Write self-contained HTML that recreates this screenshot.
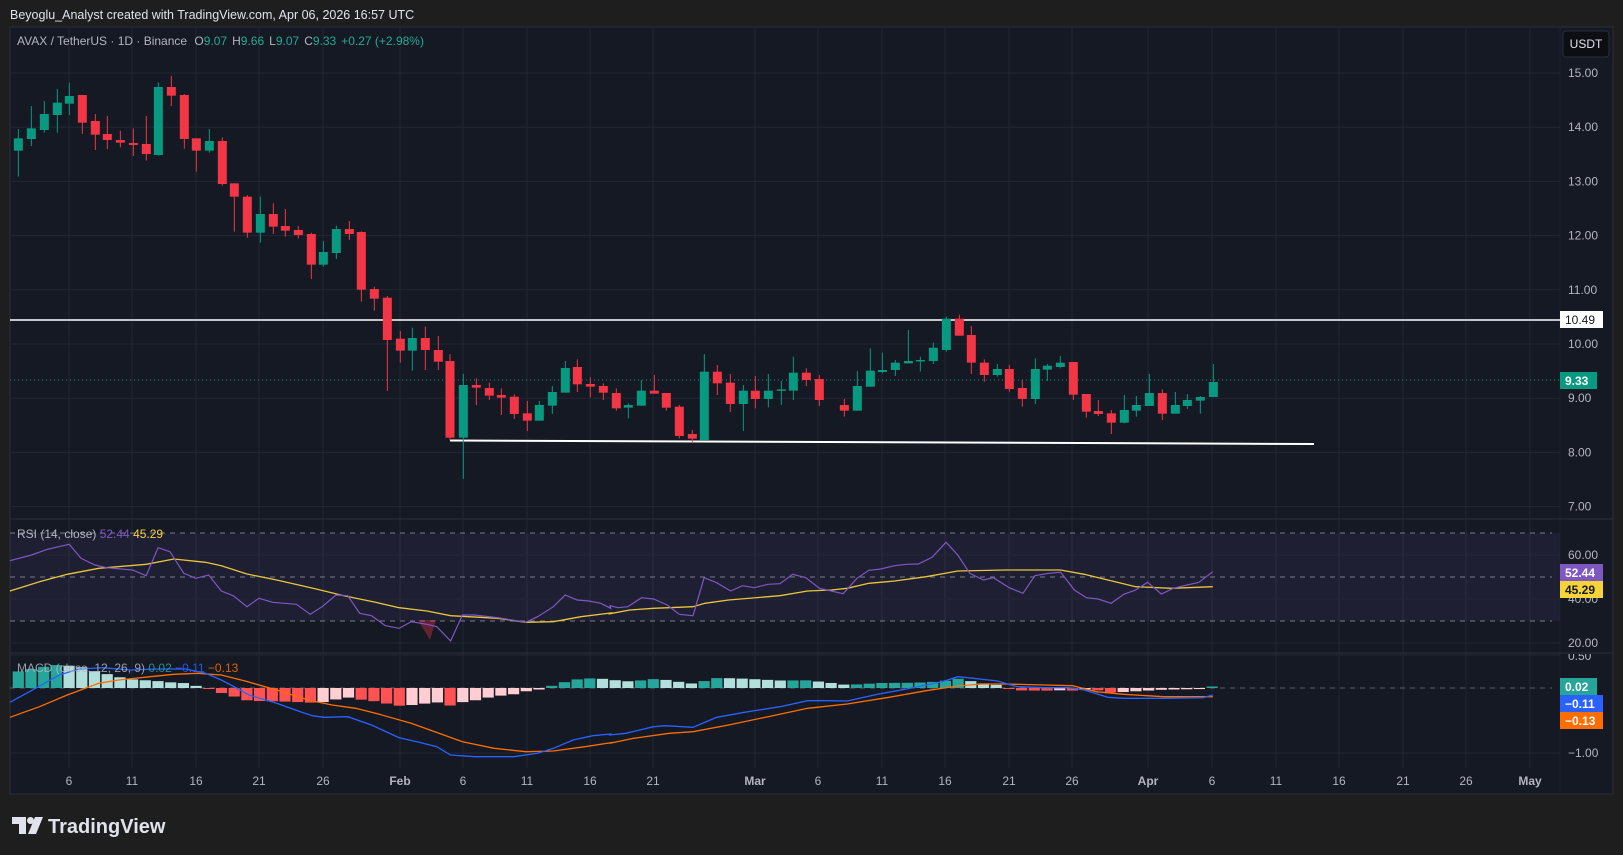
<!DOCTYPE html>
<html><head><meta charset="utf-8"><style>
html,body{margin:0;padding:0;background:#1e1e1e;width:1623px;height:855px;overflow:hidden;font-family:"Liberation Sans",sans-serif}
</style></head><body>
<svg id="s" width="1623" height="855" xmlns="http://www.w3.org/2000/svg" style="position:absolute;left:0;top:0;font-family:'Liberation Sans',sans-serif"></svg>
<script>
const S=document.getElementById('s');let h='';
const L=10,R=1613,AX=1560,T=27,B=794;
h+=`<text x="10" y="19" fill="#e0e3eb" font-size="12.5">Beyoglu_Analyst created with TradingView.com, Apr 06, 2026 16:57 UTC</text>`;
h+=`<rect x="${L}" y="${T}" width="${R-L}" height="${B-T}" fill="#151924" stroke="#2a2e39"/>`;
const dates=[[69,'6'],[132,'11'],[196,'16'],[259,'21'],[323,'26'],[400,'Feb'],[463,'6'],[527,'11'],[590,'16'],[653,'21'],[755,'Mar'],[818,'6'],[882,'11'],[945,'16'],[1009,'21'],[1072,'26'],[1148,'Apr'],[1212,'6'],[1276,'11'],[1339,'16'],[1403,'21'],[1466,'26'],[1530,'May']];
dates.forEach(d=>{h+=`<line x1="${d[0]}" y1="${T}" x2="${d[0]}" y2="768" stroke="#232733"/>`;
h+=`<text x="${d[0]}" y="785" fill="#b2b5be" font-size="12" text-anchor="middle" ${isNaN(d[1])?'font-weight="bold"':''}>${d[1]}</text>`;});
const py=p=>73+(15-p)*54.2;
for(let p=7;p<=15;p++){const y=py(p);h+=`<line x1="${L}" y1="${y}" x2="${AX}" y2="${y}" stroke="#232733"/><text x="1568" y="${y+4}" fill="#b2b5be" font-size="12">${p.toFixed(2)}</text>`;}
h+=`<line x1="${AX}" y1="${T}" x2="${AX}" y2="${B}" stroke="#1c202b"/>`;
h+=`<rect x="${L}" y="533" width="${AX-L}" height="88" fill="rgba(126,87,194,0.1)"/>`;
[[60,555],[40,599],[20,643]].forEach(a=>{h+=`<line x1="${L}" y1="${a[1]}" x2="${AX}" y2="${a[1]}" stroke="#232733"/>`;});
[533,577,621].forEach(y=>{h+=`<line x1="${L}" y1="${y}" x2="${AX-8}" y2="${y}" stroke="#787b86" stroke-dasharray="5,5"/>`;});
h+=`<text x="1568" y="559" fill="#b2b5be" font-size="12">60.00</text><text x="1568" y="603" fill="#b2b5be" font-size="12">40.00</text><text x="1568" y="647" fill="#b2b5be" font-size="12">20.00</text>`;
[655,753].forEach(y=>h+=`<line x1="${L}" y1="${y}" x2="${AX}" y2="${y}" stroke="#232733"/>`);
h+=`<line x1="${L}" y1="688" x2="${AX-8}" y2="688" stroke="#787b86" stroke-dasharray="5,5" opacity=".7"/>`;
h+=`<text x="1568" y="660" fill="#b2b5be" font-size="12">0.50</text><text x="1568" y="757" fill="#b2b5be" font-size="12">−1.00</text>`;
h+=`<rect x="1561" y="648" width="51" height="6" fill="#151924"/>`;
h+=`<line x1="${L}" y1="519" x2="${R}" y2="519" stroke="#2a2e39"/><line x1="${L}" y1="653" x2="${R}" y2="653" stroke="#2a2e39"/>`;
const z4=[[25,'G',235,272,207,350],[64,'G',205,237,138,258],[103,'G',162,210,123,218],[142,'G',128,165,87,218],[178,'G',108,131,68,165],[217,'R',105,188,105,222],[256,'R',183,224,162,270],[292,'R',222,240,168,267],[331,'R',240,248,212,262],[370,'R',249,255,205,288],[409,'R',252,282,168,302],[445,'G',81,285,67,287],[484,'R',81,107,48,138],[523,'R',105,237,102,266],[559,'R',235,272,235,335],[598,'G',243,272,207,278],[637,'R',243,372,232,377],[673,'R',370,410,370,515],[712,'R',410,518,405,533],[751,'G',462,518,410,548],[790,'R',462,500,430,522],[826,'R',498,512,447,530],[865,'R',510,525,498,535],[904,'R',522,614,518,657],[940,'G',576,614,543,620],[979,'G',507,579,497,597],[1018,'R',507,522,483,540],[1054,'R',516,689,514,725],[1093,'R',687,716,680,752],[1132,'R',713,840,708,993],[1171,'R',836,872,813,908],[1207,'G',834,872,803,932],[1246,'R',834,870,800,930],[1285,'R',870,905,828,930]];
const z5=[[30,'R',183,413,162,420],[70,'G',255,413,222,537],[109,'R',255,263,235,315],[148,'R',264,287,248,300],[184,'R',285,293,265,345],[223,'R',290,342,283,357],[262,'R',340,362,303,393],[298,'G',315,362,303,362],[337,'G',276,317,258,342],[376,'G',204,278,183,278],[412,'R',201,253,178,276],[451,'R',252,260,232,292],[490,'R',258,278,250,300],[529,'R',279,325,265,332],[565,'G',315,323,310,355],[604,'G',272,317,240,317],[643,'R',272,281,225,281],[679,'R',279,323,279,332],[718,'R',320,408,315,415],[757,'R',402,416,390,430],[793,'G',215,420,162,420],[832,'R',215,250,195,285],[871,'R',248,312,222,336],[910,'G',272,312,255,393],[946,'R',272,297,228,325],[985,'G',272,297,222,322],[1024,'G',268,272,243,315],[1060,'G',218,272,170,300],[1099,'R',218,240,205,258],[1138,'R',237,300,225,318]];
const z6=[[10,'R',296,318,285,320],[43,'R',315,332,297,350],[82,'G',258,332,213,332],[121,'G',212,260,145,260],[157,'G',210,216,158,220],[196,'G',188,210,180,228],[235,'G',183,190,90,190],[271,'G',180,183,170,215],[310,'G',143,183,128,192],[349,'G',56,150,50,155],[388,'R',56,107,44,107],[424,'R',105,188,78,222],[463,'R',188,225,178,245],[502,'G',207,225,192,230],[538,'R',207,267,195,275],[577,'R',264,297,240,320],[616,'G',207,297,175,312],[652,'G',197,209,192,243],[691,'G',188,201,168,205],[730,'R',186,284,186,300],[769,'R',282,335,282,353],[805,'R',333,342,300,348],[844,'R',340,368,330,402],[883,'G',330,368,285,370],[919,'G',315,332,288,350],[958,'G',279,318,222,318],[997,'R',279,341,268,360],[1036,'G',315,341,276,341],[1072,'G',300,318,282,327],[1111,'G',291,302,288,341],[1150,'G',246,291,192,291]];
h+=`<line x1="${L}" y1="320" x2="${AX}" y2="320" stroke="#fff" stroke-width="1.6"/>`;
h+=`<line x1="450" y1="440.5" x2="1314" y2="444" stroke="#fff" stroke-width="2"/>`;
h+=`<line x1="${L}" y1="380" x2="${AX}" y2="380" stroke="#089981" stroke-dasharray="1,3"/>`;
function cd(x,c,bt,bb,wt,wb){const col=c=='G'?'#089981':'#f23645';const bh=Math.max(bb-bt,1.5);
h+=`<line x1="${x}" y1="${wt}" x2="${x}" y2="${wb}" stroke="${col}" stroke-width="1"/><rect x="${x-4.5}" y="${bt}" width="9" height="${bh}" fill="${col}"/>`;}
z4.forEach(a=>cd(10+a[0]/3,a[1],60+a[2]/3,60+a[3]/3,60+a[4]/3,60+a[5]/3));
z5.forEach(a=>cd(440+a[0]/3,a[1],300+a[2]/3,300+a[3]/3,300+a[4]/3,300+a[5]/3));
z6.slice(1).forEach(a=>cd(830+a[0]/3,a[1],300+a[2]/3,300+a[3]/3,300+a[4]/3,300+a[5]/3));
const m7=p=>p.map(a=>[a[0]/2.53,515+a[1]/3]),m8=p=>p.map(a=>[610+a[0]/2.53,515+a[1]/3]);
const rsi=m7([[25,137],[80,120],[120,103],[175,88],[205,130],[240,150],[270,158],[335,165],[370,182],[400,98],[430,110],[465,175],[495,190],[528,180],[560,228],[590,242],[625,275],[655,250],[690,262],[750,268],[785,298],[815,275],[850,240],[880,242],[910,295],[940,302],[975,332],[1010,340],[1040,320],[1080,328],[1105,335],[1140,378],[1170,300],[1200,300],[1260,308],[1330,322],[1360,305],[1400,275],[1430,240],[1460,255],[1490,258],[1520,265],[1545,280]]).concat(m8([[0,272],[20,278],[45,275],[80,248],[110,252],[145,270],[175,298],[210,302],[238,188],[270,203],[305,228],[335,212],[365,218],[400,208],[430,206],[462,178],[495,188],[530,220],[560,228],[590,236],[625,190],[655,166],[685,162],[720,152],[750,148],[780,147],[815,127],[850,82],[880,120],[910,175],[945,195],[970,188],[1010,218],[1045,235],[1075,182],[1110,175],[1140,172],[1175,225],[1205,248],[1235,252],[1268,265],[1300,238],[1330,225],[1360,202],[1395,237],[1425,220],[1460,210],[1490,202],[1525,170]]));
const rma=m7([[25,228],[100,200],[170,178],[250,160],[370,148],[440,132],[520,142],[560,152],[625,177],[700,195],[800,222],[870,242],[950,262],[1010,278],[1080,288],[1140,302],[1260,310],[1330,322],[1400,320],[1470,305],[1545,294]]).concat(m8([[0,296],[50,285],[110,280],[210,275],[240,265],[300,255],[430,242],[500,228],[560,225],[600,220],[655,205],[720,198],[800,185],[880,168],[1000,165],[1140,165],[1200,178],[1270,198],[1330,215],[1420,220],[1525,215]]));
const pl=(p,c,w)=>`<polyline points="${p.map(a=>a[0].toFixed(1)+','+a[1].toFixed(1)).join(' ')}" fill="none" stroke="${c}" stroke-width="${w}"/>`;
h+=`<polygon points="418,620 430,640 436,620" fill="rgba(242,54,69,0.35)"/>`;
h+=pl(rma,'#e8c53a',1.3)+pl(rsi,'#7e57c2',1.2);
const mac=m7([[25,562],[90,520],[150,480],[200,462],[260,458],[330,465],[400,462],[470,462],[520,475],[560,495],[600,520],[630,540],[700,565],[760,590],[790,602],[820,607],[880,605],[940,630],[1010,668],[1060,682],[1105,695],[1140,720],[1200,725],[1300,725],[1360,715],[1400,700],[1450,675],[1500,662],[1545,657]]).concat(m8([[0,660],[40,655],[110,635],[140,632],[210,637],[270,607],[340,592],[430,575],[500,557],[550,557],[600,558],[680,537],[750,522],[800,510],[840,500],[880,485],[920,490],[980,498],[1030,515],[1100,518],[1160,518],[1200,525],[1260,547],[1300,550],[1400,550],[1500,548],[1525,540]]));
const sig=m7([[25,607],[100,575],[170,540],[250,505],[300,495],[380,485],[440,478],[500,475],[560,480],[620,498],[700,525],[780,555],[840,570],[900,580],[960,598],[1040,625],[1100,650],[1170,680],[1250,700],[1330,710],[1400,708],[1480,695],[1545,683]]).concat(m8([[0,685],[60,670],[150,655],[210,650],[300,630],[400,605],[500,580],[600,567],[700,548],[800,527],[880,513],[940,507],[1000,507],[1100,510],[1170,512],[1230,530],[1300,538],[1400,545],[1525,545]]));
const itp=(p,x)=>{for(let i=1;i<p.length;i++){if(p[i][0]>=x){const a=p[i-1],b=p[i];const t=(x-a[0])/(b[0]-a[0]||1);return a[1]+t*(b[1]-a[1]);}}return p[p.length-1][1];};
let prev=null;
for(let i=0;i<96;i++){const x=18.3+i*12.7;if(x>1214)break;const d=itp(sig,x)-itp(mac,x);let col;
if(prev===null)prev=d;
if(d>=0)col=d>=prev?'#26a69a':'#b2dfdb';else col=d<=prev?'#ff5252':'#ffcdd2';prev=d;
const y=d>=0?688-d:688;h+=`<rect x="${x-5.6}" y="${y}" width="11.2" height="${Math.max(Math.abs(d),1)}" fill="${col}"/>`;}
h+=pl(sig,'#ff6d00',1.3)+pl(mac,'#2962ff',1.3);
h+=`<text x="17" y="45" font-size="12" fill="#b2b5be">AVAX / TetherUS · 1D · Binance <tspan dx="4">O</tspan><tspan fill="#22ab94">9.07</tspan><tspan dx="5">H</tspan><tspan fill="#22ab94">9.66</tspan><tspan dx="5">L</tspan><tspan fill="#22ab94">9.07</tspan><tspan dx="5">C</tspan><tspan fill="#22ab94">9.33</tspan><tspan dx="5" fill="#22ab94">+0.27 (+2.98%)</tspan></text>`;
h+=`<text x="17" y="538" font-size="12" fill="#b2b5be">RSI (14, close) <tspan fill="#7e57c2">52.44</tspan> <tspan fill="#f7d13a">45.29</tspan></text>`;
h+=`<text x="17" y="672" font-size="12" fill="#b2b5be" opacity=".85">MACD (close, 12, 26, 9) <tspan fill="#26a69a">0.02</tspan> <tspan fill="#2962ff">−0.11</tspan> <tspan fill="#ff6d00">−0.13</tspan></text>`;
h+=`<rect x="1563" y="31" width="46" height="26" rx="3" fill="#0c0e13" stroke="#2a2e39"/><text x="1586" y="48" font-size="12" fill="#e0e3eb" text-anchor="middle">USDT</text>`;
const lab=(y,w,bg,fg,t)=>{h+=`<rect x="1560" y="${y}" width="${w}" height="17" fill="${bg}"/><text x="1565" y="${y+13}" font-size="12" fill="${fg}" font-weight="bold">${t}</text>`;};
lab(311,43,'#ffffff','#131722','<tspan font-weight="normal">10.49</tspan>');
lab(372,37,'#089981','#fff','9.33');
lab(564,43,'#7e57c2','#fff','52.44');
lab(581,43,'#f7d33a','#131722','45.29');
lab(678,37,'#26a69a','#fff','0.02');
lab(695,43,'#2962ff','#fff','−0.11');
lab(712,43,'#ff6d00','#fff','−0.13');
h+=`<path d="M12 817h14v17h-7v-10h-7z" fill="#e0e3eb"/><circle cx="30.5" cy="820.5" r="3.5" fill="#e0e3eb"/><path d="M35 817h8l-7 17h-8z" fill="#e0e3eb"/>`;
h+=`<text x="48" y="833" font-size="20" font-weight="bold" fill="#e0e3eb">TradingView</text>`;
S.innerHTML=h;
</script>
</body></html>
